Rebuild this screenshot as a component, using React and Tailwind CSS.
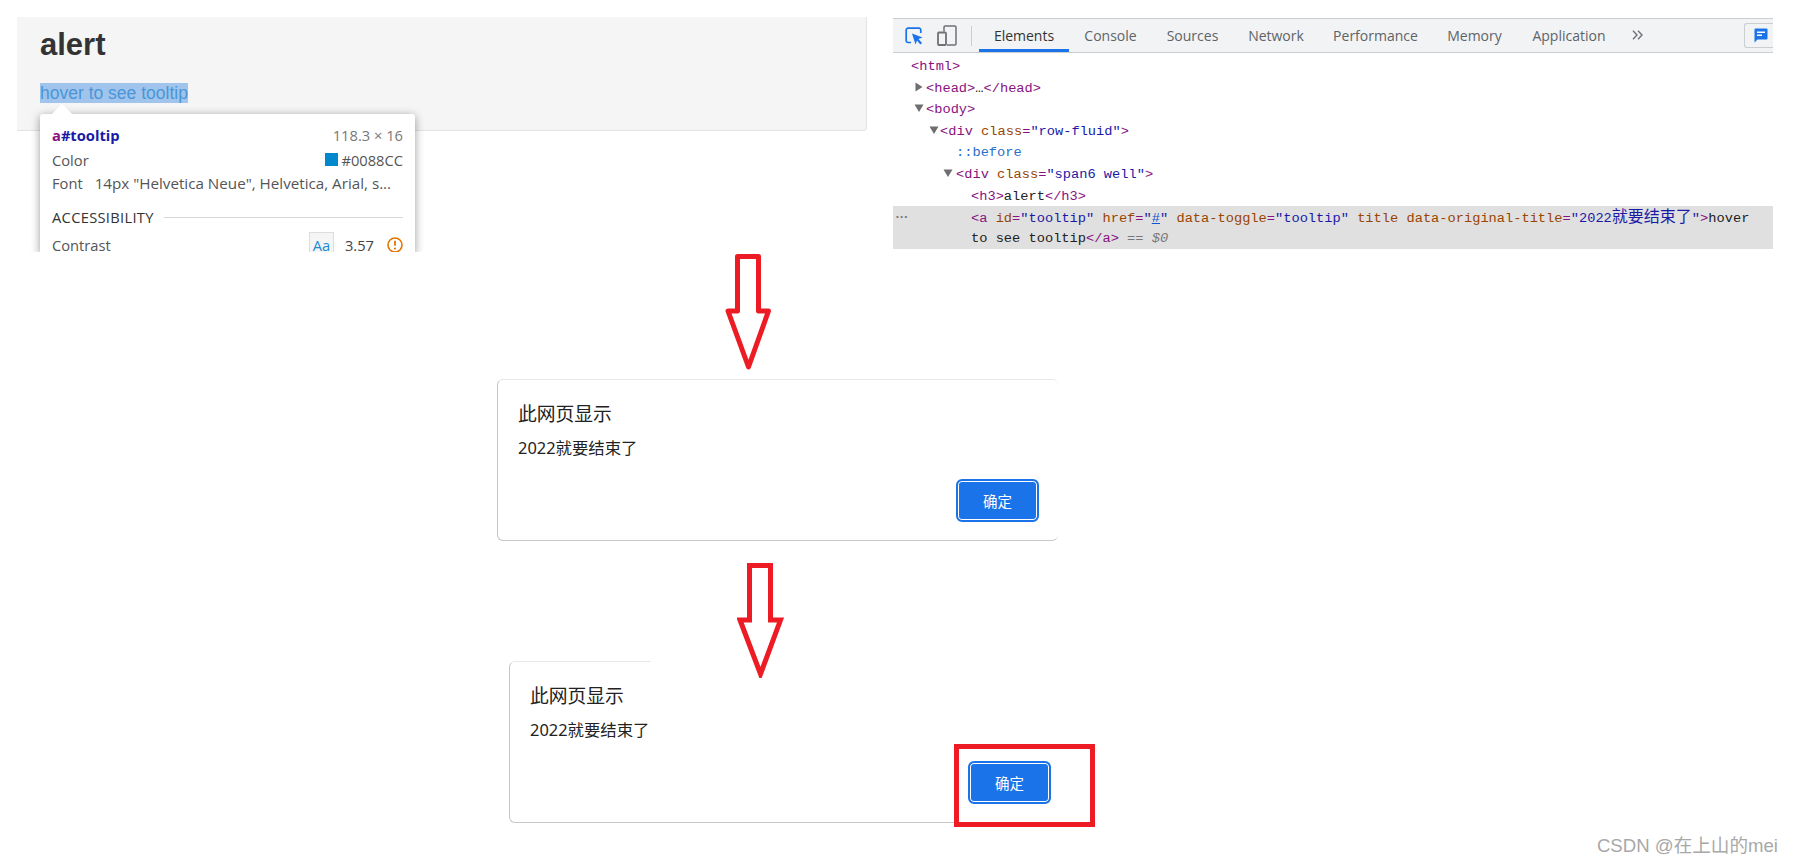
const UI = { fontFamily: '"Open Sans", "Noto Sans", sans-serif' };

function Tri({ down, x }) {
  return (
    <svg width="10" height="10" viewBox="0 0 10 10" className="absolute top-[5px]" style={{ left: x }}>
      {down ? <polygon points="0.5,1.5 9.5,1.5 5,9" fill="#6e6e6e" /> : <polygon points="1.5,0.5 8.5,5 1.5,9.5" fill="#6e6e6e" />}
    </svg>
  );
}

const T = ({ children }) => <span className="text-[#881280]">{children}</span>;
const A = ({ children }) => <span className="text-[#994500]">{children}</span>;
const V = ({ children }) => <span className="text-[#1a1aa6]">{children}</span>;

function Row({ indent, children, tri, triDown }) {
  return (
    <div className="relative h-[21.6px] pt-[1px] leading-[21.6px] whitespace-pre" style={{ paddingLeft: indent }}>
      {tri !== undefined && <Tri down={triDown} x={tri} />}
      {children}
    </div>
  );
}

function Tab({ w, active, children }) {
  return (
    <div
      className={`flex h-full items-center justify-center text-[14px] ${active ? "border-b-[3px] border-[#1a73e8] pt-[3px] text-[#333]" : "text-[#5f6368]"}`}
      style={{ width: w }}
    >
      {children}
    </div>
  );
}

function Devtools() {
  return (
    <div className="ml-[26px] flex h-[252px] w-[880px] flex-col pt-[18px]">
      <div className="flex h-[35px] items-stretch border-y border-[#cbcdd1] bg-[#f1f3f4]" style={UI}>
        <div className="flex w-[86px] items-center pl-[12px]">
          <svg width="18" height="18" viewBox="0 0 18 18" fill="none">
            <path d="M6 15.5H3A1.8 1.8 0 0 1 1.2 13.7V3A1.8 1.8 0 0 1 3 1.2h11A1.8 1.8 0 0 1 15.8 3v3" stroke="#1a73e8" strokeWidth="1.7" />
            <path d="M7 6.5 17.5 10.5 13.5 12 17 16 15.3 17.6 12 13.6 10.5 17.5Z" fill="#1a73e8" />
          </svg>
          <svg className="ml-[14px]" width="20" height="21" viewBox="0 0 20 21" fill="none">
            <path d="M7 6.5V2.2A1.2 1.2 0 0 1 8.2 1h9.6A1.2 1.2 0 0 1 19 2.2v16.6a1.2 1.2 0 0 1-1.2 1.2H10" stroke="#6e7175" strokeWidth="1.5" />
            <rect x="1" y="7.5" width="8" height="12.5" rx="1" stroke="#6e7175" strokeWidth="1.8" />
          </svg>
          <div className="ml-[14px] h-[20px] w-px bg-[#cbcdd1]" />
        </div>
        <Tab w={90} active>Elements</Tab>
        <Tab w={83}>Console</Tab>
        <Tab w={81}>Sources</Tab>
        <Tab w={86}>Network</Tab>
        <Tab w={113}>Performance</Tab>
        <Tab w={85}>Memory</Tab>
        <Tab w={104}>Application</Tab>
        <div className="flex items-center pl-[11px] pb-[2px]">
          <svg width="11" height="10" viewBox="0 0 11 10" fill="none" stroke="#6e7175" strokeWidth="1.4">
            <path d="M1 0.8 5 5 1 9.2M6 0.8 10 5 6 9.2" />
          </svg>
        </div>
        <div className="ml-auto flex items-center">
          <div className="flex h-[25px] w-[29px] items-center justify-center rounded-l-[3px] border border-r-0 border-[#cbcdd1] pl-[3px]">
            <svg width="14" height="15" viewBox="0 0 14 15">
              <path d="M1.5 0.5h11a1 1 0 0 1 1 1v9a1 1 0 0 1-1 1H3.5L0.5 14.5V1.5a1 1 0 0 1 1-1Z" fill="#1a73e8" />
              <rect x="3" y="3.5" width="8" height="1.5" fill="#fff" />
              <rect x="3" y="6.5" width="5" height="1.5" fill="#fff" />
            </svg>
          </div>
        </div>
      </div>
      <div className="pt-[2px] text-[13.7px] text-[#222]" style={{ fontFamily: '"Liberation Mono", "Noto Sans CJK SC", monospace' }}>
        <Row indent={18}><T>{"<html>"}</T></Row>
        <Row indent={33} tri={21}><T>{"<head>"}</T>…<T>{"</head>"}</T></Row>
        <Row indent={33} tri={21} triDown><T>{"<body>"}</T></Row>
        <Row indent={47} tri={36} triDown>
          <T>{"<div "}</T><A>class</A><T>=</T><V>"row-fluid"</V><T>{">"}</T>
        </Row>
        <Row indent={63}><span className="text-[#2a6fc9]">::before</span></Row>
        <Row indent={63} tri={50} triDown>
          <T>{"<div "}</T><A>class</A><T>=</T><V>"span6 well"</V><T>{">"}</T>
        </Row>
        <Row indent={78}><T>{"<h3>"}</T>alert<T>{"</h3>"}</T></Row>
        <div className="relative h-[43px] whitespace-pre bg-[#e0e0e0] pl-[78px] pt-[3px] leading-[19.5px]">
          <span className="absolute left-[2px] top-[1px] text-[8px] tracking-[-0.5px] text-[#777]">•••</span>
          <div>
            <T>{"<a "}</T><A>id</A><T>=</T><V>"tooltip"</V> <A>href</A><T>=</T><V>"<span className="text-[#1155cc] underline">#</span>"</V> <A>data-toggle</A><T>=</T><V>"tooltip"</V> <A>title</A> <A>data-original-title</A><T>=</T><V>"2022<span className="text-[16px]">就要结束了</span>"</V><T>{">"}</T>hover
          </div>
          <div>
            to see tooltip<T>{"</a>"}</T> <span className="text-[#777]">== <i>$0</i></span>
          </div>
        </div>
      </div>
    </div>
  );
}

function Tooltip() {
  return (
    <div className="absolute left-[40px] top-[104px] w-[375px]" style={UI}>
      <div className="relative z-10 ml-[12px] h-0 w-0 border-x-[10px] border-b-[10px] border-x-transparent border-b-white" />
      <div className="h-[140px] rounded-[3px] bg-white px-[12px] pt-[9px] text-[14.7px] text-[#555] shadow-[0_2px_10px_rgba(0,0,0,0.4)]">
        <div className="flex h-[24px] items-center justify-between">
          <span className="font-bold"><span className="text-[#881280]">a</span><span className="text-[#1a1aa6]">#tooltip</span></span>
          <span className="text-[#777]">118.3 × 16</span>
        </div>
        <div className="mt-[1px] flex h-[24px] items-center justify-between">
          <span>Color</span>
          <span className="flex items-center gap-[3px]">
            <span className="h-[13px] w-[13px] bg-[#0088cc]" />
            #0088CC
          </span>
        </div>
        <div className="flex h-[23px] items-center gap-[12px] whitespace-nowrap">
          <span>Font</span>
          <span className="text-[15.2px]">14px "Helvetica Neue", Helvetica, Arial, s...</span>
        </div>
        <div className="mt-[11px] flex h-[22px] items-center gap-[10px]">
          <span className="text-[#333] tracking-[0.3px]">ACCESSIBILITY</span>
          <div className="h-px flex-1 bg-[#d8d8d8]" />
        </div>
        <div className="mt-[4px] flex h-[26px] items-center">
          <span>Contrast</span>
          <span className="ml-auto flex h-[26px] w-[25px] items-center justify-center border border-[#ddd] bg-[#f5f5f5] text-[#1a8bd0]">Aa</span>
          <span className="ml-[11px] text-[#444]">3.57</span>
          <svg className="ml-[13px]" width="16" height="16" viewBox="0 0 16 16" fill="none">
            <circle cx="8" cy="8" r="7" stroke="#e37400" strokeWidth="1.6" />
            <path d="M8 3.8v5" stroke="#e37400" strokeWidth="1.8" />
            <circle cx="8" cy="11.5" r="1.1" fill="#e37400" />
          </svg>
        </div>
      </div>
    </div>
  );
}

function Well() {
  return (
    <div className="mt-[17px] h-[114px] w-[850px] rounded-br-[4px] border-r border-b border-[#e3e3e3] bg-[#f5f5f5] pl-[23px]" style={{ fontFamily: '"Liberation Sans", sans-serif' }}>
      <div className="pt-[8px] text-[31px] font-bold leading-[40px] text-[#333]">alert</div>
      <div className="mt-[17px] h-[20px]">
        <span className="inline-block h-[20px] bg-[#a0c4ec] text-[17.5px] leading-[20px] text-[#4a96d8]">hover to see tooltip</span>
      </div>
    </div>
  );
}

function Arrow({ h, join, className }) {
  const head = 57;
  return (
    <svg className={className} width="47" height={h} viewBox={`0 0 47 ${h}`} fill="none">
      <polygon
        points={`12.5,2.5 33.5,2.5 33.5,${head} 43.5,${head} 23.5,${h - 4} 3,${head} 12.5,${head}`}
        stroke="#ed1c24"
        strokeWidth="5"
        strokeLinejoin={join}
      />
    </svg>
  );
}

function OkButton() {
  return (
    <div className="flex h-[43px] w-[83px] items-center justify-center rounded-[6px] border-[2px] border-[#1a73e8] bg-[#1a73e8] text-[14.5px] text-white shadow-[inset_0_0_0_1px_#fff]" style={{ fontFamily: '"Noto Sans CJK SC", sans-serif' }}>
      确定
    </div>
  );
}

function Text() {
  return (
    <div className="text-[#222]" style={{ fontFamily: '"Noto Sans", "Noto Sans CJK SC", sans-serif' }}>
      <div className="h-[26px] text-[18.8px] leading-[26px]">此网页显示</div>
      <div className="mt-[9px] h-[24px] text-[16.4px] leading-[24px]">2022就要结束了</div>
    </div>
  );
}

export default function App() {
  return (
    <div className="h-[865px] w-[1795px] overflow-hidden bg-white">
      <div className="relative flex h-[252px] overflow-hidden pl-[17px]">
        <Well />
        <Tooltip />
        <Devtools />
      </div>

      <Arrow h={117} join="round" className="ml-[725px] mt-[2px]" />

      <div className="ml-[497px] mt-[8px] h-[162px] w-[561px] rounded-[6px] border border-r-0 border-[#c8c8c8] border-t-[#e8e8e8] pl-[20px] pt-[21px]">
        <Text />
        <div className="mt-[19px] flex justify-end pr-[19px]">
          <OkButton />
        </div>
      </div>

      <Arrow h={115} join="miter" className="ml-[737px] mt-[22px]" />

      <div className="-mt-[17px] ml-[509px] flex items-start">
        <div className="flex h-[162px] w-[445px] flex-col">
          <div className="h-[10px] w-[142px] rounded-tl-[6px] border-l border-t border-[#c8c8c8] border-t-[#e8e8e8]" />
          <div className="flex-1 rounded-bl-[6px] border-b border-l border-[#c8c8c8] pl-[20px] pt-[12px]">
            <Text />
          </div>
        </div>
        <div className="mt-[83px] h-[83px] w-[141px] border-[5px] border-[#ed1c24] pl-[9px] pt-[12px]">
          <OkButton />
        </div>
      </div>

      <div className="mt-[8px] flex justify-end pr-[17px] text-[18.6px] leading-[22px] text-[#a8a8a8]" style={{ fontFamily: '"Liberation Sans", "Noto Sans CJK SC", sans-serif' }}>
        CSDN @在上山的mei
      </div>
    </div>
  );
}
